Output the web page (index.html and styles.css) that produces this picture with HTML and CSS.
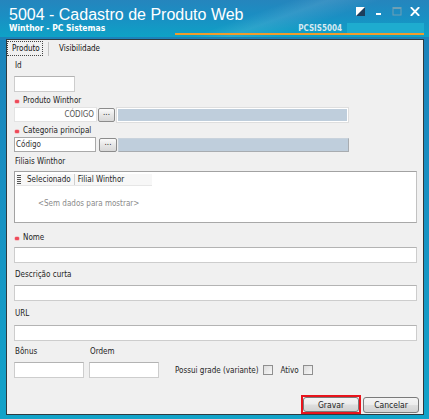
FILE: index.html
```html
<!DOCTYPE html>
<html lang="pt-BR">
<head>
<meta charset="utf-8">
<title>5004 - Cadastro de Produto Web</title>
<link rel="stylesheet" href="styles.css">
</head>
<body>
<div class="window">
  <header class="titlebar">
    <div class="title-row">
      <h1 class="title">5004 - Cadastro de Produto Web</h1>
      <div class="controls">
        <svg class="ctl ctl-theme" width="10" height="9" viewBox="0 0 10 9">
          <rect x="0.5" y="0.5" width="8" height="8" fill="#ffffff" stroke="#ffffff"/>
          <polygon points="9,0 9,9 0,9" fill="#1d3e5c"/>
        </svg>
        <svg class="ctl ctl-min" width="10" height="9" viewBox="0 0 10 9">
          <rect x="2" y="6" width="5" height="2" fill="#ffffff"/>
        </svg>
        <svg class="ctl ctl-max" width="10" height="9" viewBox="0 0 10 9">
          <rect x="1" y="0.5" width="8" height="7.5" fill="none" stroke="#6f9fb4" stroke-width="1"/>
          <rect x="1" y="0.5" width="8" height="1.5" fill="#6f9fb4"/>
        </svg>
        <svg class="ctl ctl-close" width="10" height="9" viewBox="0 0 10 9">
          <path d="M1.5 0.8 L8.5 8.2 M8.5 0.8 L1.5 8.2" stroke="#ffffff" stroke-width="1.9" stroke-linecap="square"/>
        </svg>
      </div>
    </div>
    <div class="sub-row">
      <span class="subtitle">Winthor - PC Sistemas</span>
      <span class="routine">PCSIS5004</span>
      <span class="routine-box"></span>
    </div>
    <div class="accent"></div>
  </header>

  <main class="client">
    <nav class="tabs">
      <span class="tab tab-active">Produto</span>
      <span class="tab-sep"></span>
      <span class="tab">Visibilidade</span>
    </nav>

    <section class="form">
      <div class="field f-id">
        <label class="lbl">Id</label>
        <div class="input w-id"></div>
      </div>

      <div class="field f-tight f-produto">
        <label class="lbl"><span class="req"></span>Produto Winthor</label>
        <div class="lookup">
          <div class="input code code-right">CÓDIGO</div>
          <button class="dots">...</button>
          <div class="desc desc-soft"></div>
        </div>
      </div>

      <div class="field f-tight f-categoria">
        <label class="lbl"><span class="req"></span>Categoria principal</label>
        <div class="lookup lookup-alt">
          <div class="input code code-left">Código</div>
          <button class="dots">...</button>
          <div class="desc desc-hard"></div>
        </div>
      </div>

      <div class="field f-filiais">
        <label class="lbl">Filiais Winthor</label>
        <div class="grid">
          <div class="grid-head">
            <svg class="grid-handle" width="4" height="9" viewBox="0 0 4 9">
              <rect x="0" y="0" width="4" height="1" fill="#555"/>
              <rect x="0" y="2" width="4" height="1" fill="#555"/>
              <rect x="0" y="4" width="4" height="1" fill="#555"/>
              <rect x="0" y="6" width="4" height="1" fill="#555"/>
              <rect x="0" y="8" width="4" height="1" fill="#555"/>
            </svg>
            <span class="col col-sel">Selecionado</span>
            <span class="col col-filial">Filial Winthor</span>
          </div>
          <div class="grid-empty">&lt;Sem dados para mostrar&gt;</div>
        </div>
      </div>

      <div class="field f-nome">
        <label class="lbl"><span class="req"></span>Nome</label>
        <div class="input"></div>
      </div>

      <div class="field f-desc">
        <label class="lbl">Descrição curta</label>
        <div class="input"></div>
      </div>

      <div class="field f-url">
        <label class="lbl">URL</label>
        <div class="input"></div>
      </div>

      <div class="bottom-row">
        <div class="field">
          <label class="lbl">Bônus</label>
          <div class="input w-small"></div>
        </div>
        <div class="field">
          <label class="lbl">Ordem</label>
          <div class="input w-small"></div>
        </div>
        <div class="check-group">
          <span>Possui grade (variante)</span>
          <span class="checkbox"></span>
          <span class="check-label">Ativo</span>
          <span class="checkbox"></span>
        </div>
      </div>
    </section>

    <footer class="actions">
      <div class="highlight"><button class="btn btn-save">Gravar</button></div>
      <button class="btn btn-cancel">Cancelar</button>
    </footer>
  </main>
</div>
</body>
</html>
```

FILE: styles.css
```css
* { box-sizing: border-box; }

html, body { margin: 0; padding: 0; }

body {
  width: 429px;
  height: 419px;
  overflow: hidden;
  font-family: "DejaVu Sans Condensed", "DejaVu Sans", sans-serif;
  font-stretch: condensed;
  font-size: 8px;
  color: #1e1e1e;
}

/* ---------- window frame ---------- */
.window {
  width: 429px;
  height: 419px;
  display: flex;
  flex-direction: column;
  background: linear-gradient(to bottom, #1c7fb8 0%, #1890c2 45%, #12a3c9 100%);
}

.titlebar {
  height: 37px;
  flex: none;
  display: flex;
  flex-direction: column;
  background:
    linear-gradient(160deg, rgba(255,255,255,0) 55%, rgba(255,255,255,0.10) 62%, rgba(255,255,255,0) 72%),
    linear-gradient(to bottom, #2585bd 0%, #1a8fc3 45%, #0ea2c6 100%);
}

.title-row {
  display: flex;
  align-items: flex-start;
  height: 23px;
  padding-left: 9px;
}

.title {
  margin: 7px 0 0 0;
  font-family: "Liberation Sans", Arial, sans-serif;
  font-weight: normal;
  font-stretch: normal;
  font-size: 16px;
  line-height: 16px;
  color: #ffffff;
}

.controls {
  margin-left: auto;
  margin-right: 9px;
  padding-top: 7px;
  display: flex;
  gap: 8px;
}

.ctl { display: block; }

.sub-row {
  height: 10px;
  display: flex;
  align-items: center;
  padding-left: 9px;
}

.subtitle {
  font-weight: bold;
  font-size: 8.5px;
  color: #ffffff;
}

.routine {
  margin-left: auto;
  margin-right: 5px;
  font-weight: bold;
  font-size: 8px;
  color: #d6e9f2;
}

.routine-box {
  width: 77px;
  height: 10px;
  margin-right: 5px;
  background: #1eaccf;
}

.accent {
  height: 2px;
  margin: 0 5px 0 175px;
  background: #f09c2c;
}

/* ---------- client area ---------- */
.client {
  flex: 1;
  margin: 2px 5px 4px 6px;
  border: 1px solid #2e3a40;
  background: #f0f0f0;
  display: flex;
  flex-direction: column;
}

.tabs {
  height: 16px;
  display: flex;
  align-items: center;
  padding-top: 1px;
}

.tab {
  padding: 0 3px 0 4px;
  line-height: 13px;
  color: #111;
}

.tab-active {
  border: 1px dotted #444;
  width: 36px;
  height: 15px;
}

.tab-sep {
  width: 1px;
  height: 14px;
  background: #c4c4c4;
  margin: 0 6px 0 5px;
}

.form {
  display: flex;
  flex-direction: column;
  padding: 0 6px 0 7px;
}

.field {
  display: flex;
  flex-direction: column;
  gap: 5px;
}

.f-tight { gap: 1px; }
.f-id { margin-top: 5px; }
.f-produto { margin-top: 4px; }
.f-categoria { margin-top: 4px; }
.f-filiais { margin-top: 5px; gap: 4px; }
.f-nome { margin-top: 10px; gap: 4px; }
.f-desc { margin-top: 7px; }
.f-url { margin-top: 8px; gap: 6px; }

.lbl {
  display: flex;
  align-items: center;
  height: 10px;
  line-height: 10px;
  padding-left: 1px;
  color: #1e1e1e;
}

.req {
  width: 4px;
  height: 3px;
  margin-right: 4px;
  background: #ee4b5a;
  border-radius: 1px;
  box-shadow: 0 0 0 0.5px #f59aa2;
}

.input {
  height: 16px;
  background: #ffffff;
  border: 1px solid #cdcdcd;
  border-top-color: #b3b3b3;
}

.w-id { width: 61px; }
.w-small { width: 70px; }

/* lookup: code + search button + description */
.lookup {
  display: flex;
  align-items: center;
  height: 15px;
}

.code {
  width: 83px;
  height: 15px;
  line-height: 13px;
  color: #555;
}

.code-right { text-align: right; padding-right: 2px; border-color: #e3e3e3; }
.code-left { width: 82px; padding-left: 1px; color: #333; border-color: #a9a9a9; }

.dots {
  font: inherit;
  width: 17px;
  height: 14px;
  margin: 0 0 0 1px;
  padding: 0 0 3px 0;
  line-height: 8px;
  color: #222;
  border: 1px solid #8c8c8c;
  border-radius: 2px;
  background: linear-gradient(to bottom, #fafafa, #e6e6e6 50%, #d8d8d8);
}

.lookup-alt .dots { width: 18px; margin-left: 3px; }

.desc {
  height: 14px;
  margin-left: 2px;
  background: #bfcedc;
}

.desc-soft {
  width: 231px;
  border: 1px solid #ffffff;
  box-shadow: 0 0 0 1px #dedede;
}

.desc-hard {
  width: 231px;
  margin-left: 1px;
  border: 1px solid #c8d2dc;
  border-right-color: #a8acb0;
  border-bottom-color: #a8acb0;
}

/* grid */
.grid {
  height: 52px;
  background: #ffffff;
  border: 1px solid #a2a2a2;
  border-right-color: #c2c2c2;
  border-bottom-color: #a8a8a8;
  padding: 2px 0 0 1px;
}

.grid-head {
  width: 136px;
  height: 12px;
  display: flex;
  align-items: center;
  background: #f7f7f7;
  border-bottom: 1px solid #e6e6e6;
  padding-left: 1px;
}

.grid-handle { display: block; margin-right: 6px; }

.col { line-height: 11px; color: #1e1e1e; }

.col-sel {
  padding-right: 3px;
  border-right: 1px solid #d0d0d0;
}

.col-filial { padding-left: 3px; }

.grid-empty {
  margin: 13px 0 0 22px;
  color: #8a8a8a;
}

/* bottom row */
.bottom-row {
  display: flex;
  align-items: flex-end;
  gap: 5px;
  margin-top: 6px;
}

.check-group {
  height: 16px;
  display: flex;
  align-items: center;
  margin-left: 11px;
}

.checkbox {
  width: 10px;
  height: 10px;
  margin-left: 4px;
  border: 1px solid #8f8f8f;
  background: linear-gradient(135deg, #dcdcdc, #f7f7f7);
}

.check-label { margin-left: 8px; }

/* action buttons */
.actions {
  margin-top: auto;
  display: flex;
  justify-content: flex-end;
  align-items: flex-end;
  gap: 2px;
  padding-right: 4px;
}

.highlight {
  border: 2px solid #e8141c;
  display: flex;
}

.btn {
  font: inherit;
  font-size: 8.5px;
  color: #1e1e1e;
  width: 56px;
  padding: 0;
  border: 1px solid #7a7a7a;
  border-radius: 3px;
  background: linear-gradient(to bottom, #f4f4f4 0%, #ececec 48%, #dedede 52%, #d2d2d2 100%);
}

.btn-save { height: 15px; }
.btn-cancel { height: 16px; margin-bottom: 1px; }
```
